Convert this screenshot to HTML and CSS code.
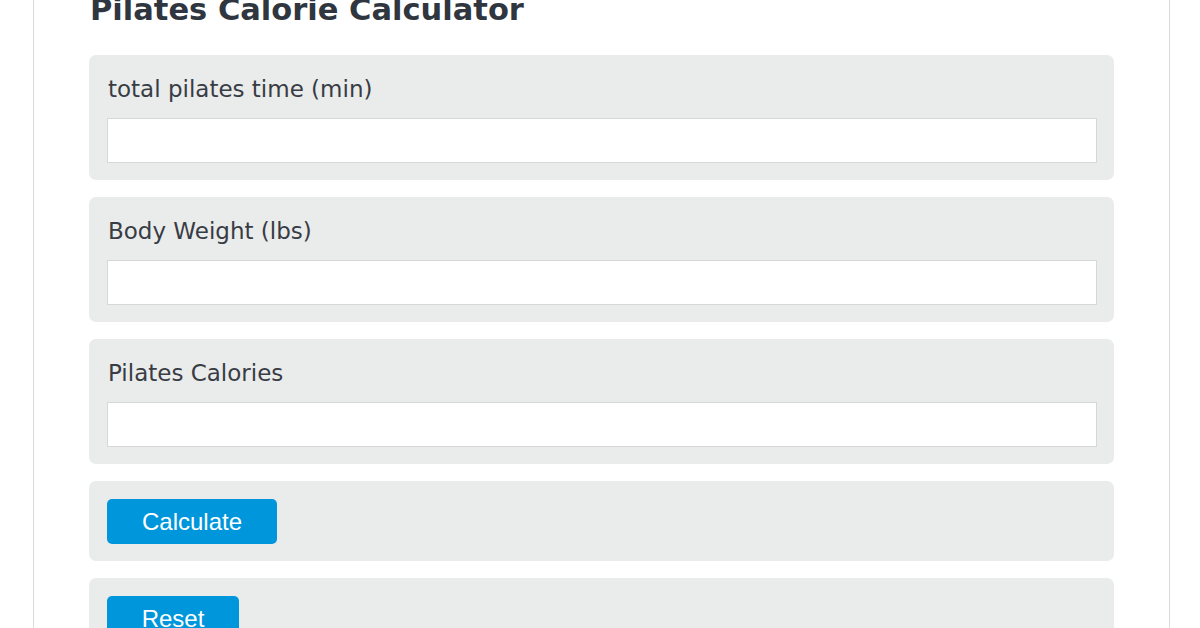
FILE: index.html
```html
<!DOCTYPE html>
<html>
<head>
<meta charset="utf-8">
<link rel="stylesheet" href="styles.css">
</head>
<body>
<div class="card">
  <h1 class="title">Pilates Calorie Calculator</h1>
  <div class="panel">
    <label class="label">total pilates time (min)</label>
    <input class="field" type="text">
  </div>
  <div class="panel">
    <label class="label">Body Weight (lbs)</label>
    <input class="field" type="text">
  </div>
  <div class="panel">
    <label class="label">Pilates Calories</label>
    <input class="field" type="text">
  </div>
  <div class="panel">
    <button class="btn btn-calc">Calculate</button>
  </div>
  <div class="panel">
    <button class="btn btn-reset">Reset</button>
  </div>
</div>
</body>
</html>
```
FILE: styles.css
```css
html, body {
  margin: 0;
  padding: 0;
  background: #ffffff;
  overflow: hidden;
}
body {
  height: 628px;
}
.card {
  margin: -20px 0 0 33px;
  border-left: 1px solid #d8dcdf;
  border-right: 1px solid #d8dcdf;
  padding: 0 55px 40px 55px;
  box-sizing: border-box;
  width: 1137px;
  min-height: 700px;
}
.title {
  margin: 0 0 25px 1px;
  padding-top: 10px;
  font-family: "DejaVu Sans", sans-serif;
  font-weight: 700;
  font-size: 30.5px;
  line-height: 40px;
  color: #2f3640;
}
.panel {
  background: #eaebeb;
  border-radius: 7px;
  padding: 18px 17px 17px 18px;
  margin-bottom: 17px;
  display: flex;
  flex-direction: column;
  align-items: flex-start;
}
.label {
  font-family: "DejaVu Sans", sans-serif;
  font-size: 23px;
  line-height: 28px;
  color: #383c44;
  margin: 2px 0 15px 1px;
}
.field {
  width: 100%;
  height: 45px;
  box-sizing: border-box;
  border: 1px solid #d6d8d8;
  background: #ffffff;
  margin: 0;
}
.btn {
  font-family: "Liberation Sans", Arial, sans-serif;
  font-size: 24px;
  color: #ffffff;
  background: #0096dc;
  border: none;
  border-radius: 5px;
  height: 45px;
  padding: 0;
  cursor: pointer;
}
.btn-calc {
  width: 170px;
}
.btn-reset {
  width: 132px;
}
```
